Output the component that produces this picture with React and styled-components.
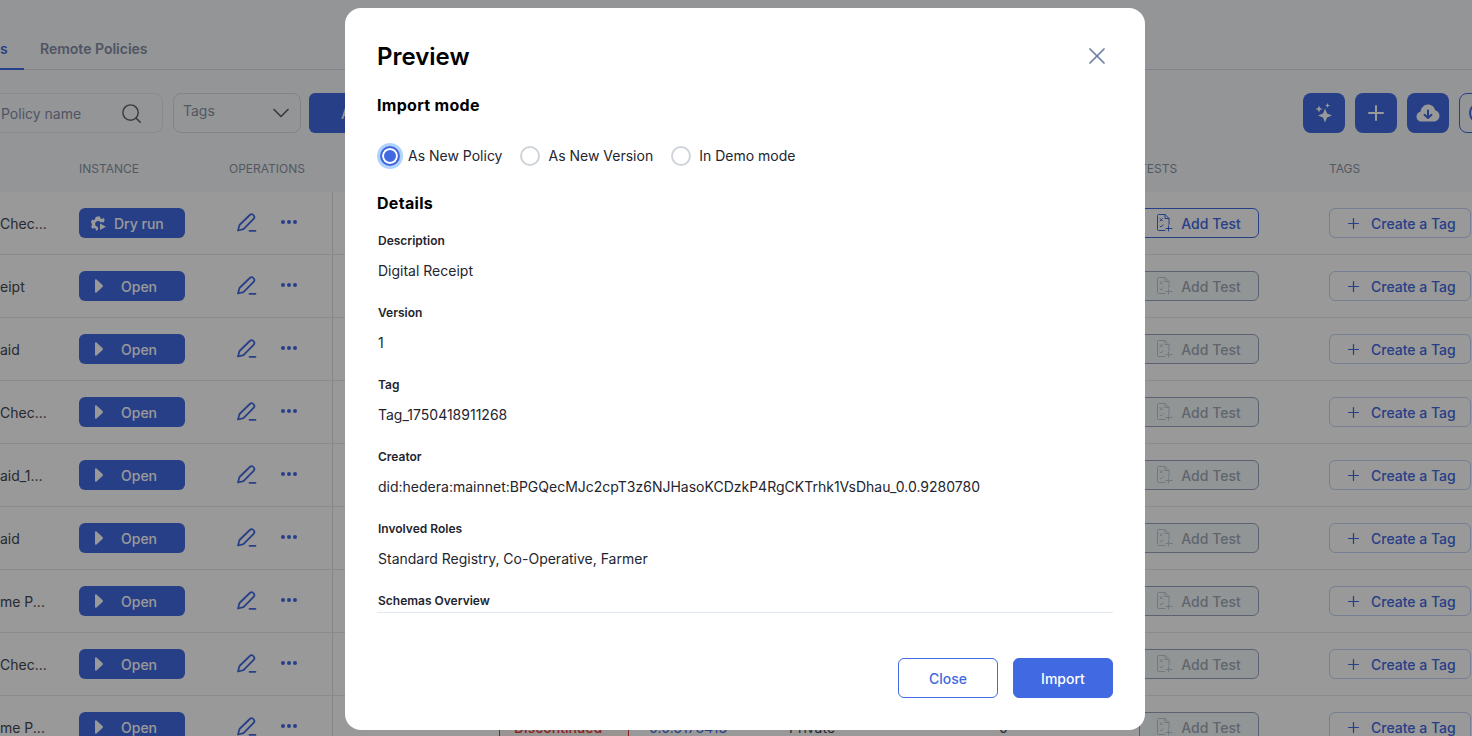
import styled, { createGlobalStyle } from 'styled-components'
import { Search, ChevronDown, Plus, X, Circle } from 'lucide-react'

const rows = [
  { name: 'Chec...', dry: true, active: true },
  { name: 'eipt' },
  { name: 'aid' },
  { name: 'Chec...' },
  { name: 'aid_1...' },
  { name: 'aid' },
  { name: 'me P...' },
  { name: 'Chec...' },
  { name: 'me P...', status: 'Discontinued', topic: '0.0.6178413', kind: 'Private', count: '0' },
]

const details = [
  { label: 'Description', value: 'Digital Receipt' },
  { label: 'Version', value: '1' },
  { label: 'Tag', value: 'Tag_1750418911268' },
  { label: 'Creator', value: 'did:hedera:mainnet:BPGQecMJc2cpT3z6NJHasoKCDzkP4RgCKTrhk1VsDhau_0.0.9280780' },
  { label: 'Involved Roles', value: 'Standard Registry, Co-Operative, Farmer' },
]

const SparkIcon = () => (
  <svg width="20" height="22" viewBox="0 0 20 22" fill="currentColor">
    <path d="M11 6.500 13 11.500 18 13.500 13 15.500 11 20.500 9 15.500 4 13.500 9 11.500Z" />
    <path d="M5 3.500 6 6 8.500 7 6 8 5 10.500 4 8 1.500 7 4 6Z" />
    <path d="M13.500 1 14.200 2.800 16 3.500 14.200 4.200 13.500 6 12.800 4.200 11 3.500 12.800 2.800Z" />
  </svg>
)

const CloudIcon = () => (
  <svg width="24" height="18" viewBox="0 0 24 18">
    <path fill="#fff" d="M6 17.500C2.800 17.500.5 15.300.5 12.400c0-2.500 1.700-4.500 4.100-5C5.300 3.300 8.400.5 12 .5c3.500 0 6.400 2.400 7.200 5.700 2.500.6 4.300 2.900 4.300 5.500 0 3.200-2.500 5.800-5.700 5.800Z" />
    <path fill="none" stroke="#4169e2" strokeWidth="2" strokeLinecap="round" strokeLinejoin="round" d="M12 6.500v7.500M8.500 10.800 12 14l3.500-3.200" />
  </svg>
)

const PenIcon = () => (
  <svg width="20" height="19" viewBox="0 0 20 19" fill="none" stroke="currentColor" strokeWidth="1.750" strokeLinecap="round" strokeLinejoin="round">
    <path d="M1 17.500 2.500 12 12.800 2a2.500 2.500 0 0 1 3.500 0l.3.300a2.500 2.500 0 0 1 0 3.500L6.500 16.200Z" />
    <path d="M12.500 17.800H18.500" />
  </svg>
)

const DotsIcon = () => (
  <svg width="16" height="4" viewBox="0 0 16 4" fill="currentColor">
    <circle cx="2" cy="2" r="2" />
    <circle cx="8" cy="2" r="2" />
    <circle cx="14" cy="2" r="2" />
  </svg>
)

const PlayIcon = () => (
  <svg width="8" height="14" viewBox="0 0 8 14" fill="currentColor">
    <path d="M0 1.200C0 .3.800-.2 1.500.4l6 5.600c.6.500.6 1.500 0 2l-6 5.600C.8 14.200 0 13.700 0 12.800Z" />
  </svg>
)

const GearPlayIcon = () => (
  <svg width="15" height="15" viewBox="0 0 15 15" fill="currentColor">
    <path d="M6 .5h3l.4 1.700 1.500.7 1.500-.9 1.500 1.800-1 1.400.3 1H9.500A3 3 0 1 0 7 11v2.500l-1 1-1-.1-.5-1.800-1.300-.7-1.700.8L0 10.800l1-1.500-.2-1.600L0 6l.9-2.200 1.800.5 1.200-1L4.500 1.500Z" />
    <path d="M9 7.500v6.500l6-3.200Z" />
  </svg>
)

const TestIcon = () => (
  <svg width="16" height="18" viewBox="0 0 16 18" fill="none" stroke="currentColor" strokeWidth="1" strokeLinecap="round" strokeLinejoin="round">
    <path d="M8 16.500H1.500a1 1 0 0 1-1-1v-14a1 1 0 0 1 1-1H8l4 4v6" />
    <path d="M8 .5v4h4" />
    <path d="M3 4.500 5.500 7M5.500 4.500 3 7" />
    <path d="M3 12l1 1 2-2.200" />
    <path d="M11.500 12v5M9 14.500h6" />
  </svg>
)

const App = () => (
  <>
    <GlobalStyle />
    <Page>
      <Tabs>
        <Tab $active>s</Tab>
        <Tab>Remote Policies</Tab>
      </Tabs>
      <Toolbar>
        <SearchBox>
          Policy name
          <Search size={23} strokeWidth={1.5} />
        </SearchBox>
        <TagSelect>
          <span>Tags</span>
          <ChevronDown size={28} strokeWidth={1.5} />
        </TagSelect>
        <ImportButton>A</ImportButton>
        <ToolActions>
          <IconButton><SparkIcon /></IconButton>
          <IconButton><Plus size={24} strokeWidth={2} /></IconButton>
          <IconButton><CloudIcon /></IconButton>
          <IconButton $outline><Circle size={24} strokeWidth={2} /></IconButton>
        </ToolActions>
      </Toolbar>
      <HeadRow>
        <span />
        <HeadCell>Instance</HeadCell>
        <HeadCell>Operations</HeadCell>
        <span />
        <span />
        <span />
        <span />
        <span />
        <HeadCell>Tests</HeadCell>
        <HeadCell>Tags</HeadCell>
      </HeadRow>
      {rows.map((row, i) => (
        <Row key={i}>
          <NameCell>{row.name}</NameCell>
          <div>
            <InstanceButton $dry={row.dry}>
              {row.dry ? <GearPlayIcon /> : <PlayIcon />}
              <InstanceLabel $dry={row.dry}>{row.dry ? 'Dry run' : 'Open'}</InstanceLabel>
            </InstanceButton>
          </div>
          <OpsCell>
            <PenIcon />
            <DotsIcon />
          </OpsCell>
          <div />
          <div>{row.status && <StatusBox>{row.status}</StatusBox>}</div>
          <TopicCell>{row.topic}</TopicCell>
          <PlainCell>{row.kind}</PlainCell>
          <CountCell>{row.count}</CountCell>
          <div>
            <TestButton $active={row.active}>
              <TestGlyph $active={row.active}><TestIcon /></TestGlyph>
              Add Test
            </TestButton>
          </div>
          <div>
            <TagButton>
              <Plus size={17} strokeWidth={1.75} />
              Create a Tag
            </TagButton>
          </div>
        </Row>
      ))}
    </Page>
    <Overlay>
      <Modal>
        <TitleBar>
          <Title>Preview</Title>
          <CloseIcon><X size={28} strokeWidth={1.5} /></CloseIcon>
        </TitleBar>
        <SectionTitle>Import mode</SectionTitle>
        <RadioGroup>
          <RadioItem><Radio $checked />As New Policy</RadioItem>
          <RadioItem><Radio />As New Version</RadioItem>
          <RadioItem><Radio />In Demo mode</RadioItem>
        </RadioGroup>
        <DetailsTitle>Details</DetailsTitle>
        <DetailsBody>
          {details.map(d => (
            <Field key={d.label}>
              <FieldLabel>{d.label}</FieldLabel>
              <FieldValue>{d.value}</FieldValue>
            </Field>
          ))}
          <FieldLabel>Schemas Overview</FieldLabel>
        </DetailsBody>
        <Footer>
          <CloseButton>Close</CloseButton>
          <PrimaryButton>Import</PrimaryButton>
        </Footer>
      </Modal>
    </Overlay>
  </>
)

export default App

const GlobalStyle = createGlobalStyle`
  html, body {
    margin: 0;
    height: 100%;
    overflow: hidden;
  }
  body {
    font-family: Inter, "Liberation Sans", sans-serif;
    font-size: 14px;
    background: #f7f9fc;
  }
  * {
    box-sizing: border-box;
  }
`

const Page = styled.div`
  width: 1472px;
  height: 736px;
  overflow: hidden;
  background: #f7f9fc;
`

const Tabs = styled.div`
  height: 70px;
  display: flex;
  gap: 16px;
  border-bottom: 1px solid #d8dde6;
`

const Tab = styled.div`
  height: 70px;
  padding: 40px 0 0;
  width: ${p => (p.$active ? '24px' : 'auto')};
  font-size: 14px;
  line-height: 17px;
  font-weight: 600;
  color: ${p => (p.$active ? '#4169e2' : '#848ea5')};
  border-bottom: ${p => (p.$active ? '2px solid #4169e2' : 'none')};
`

const Toolbar = styled.div`
  height: 40px;
  margin-top: 23px;
  display: flex;
  align-items: stretch;
`

const SearchBox = styled.div`
  width: 163px;
  display: flex;
  align-items: center;
  justify-content: space-between;
  padding: 0 19px 0 1px;
  border: 1px solid #e1e7ef;
  border-left: none;
  border-radius: 0 8px 8px 0;
  color: #848ea5;
  svg {
    color: #60646b;
  }
`

const TagSelect = styled.div`
  width: 128px;
  margin-left: 10px;
  display: flex;
  align-items: center;
  justify-content: space-between;
  padding: 0 5px 5px 9px;
  border: 1px solid #d5dbe5;
  border-radius: 8px;
  color: #8a92a3;
  svg {
    color: #60646b;
    margin-top: 5px;
  }
`

const ImportButton = styled.div`
  width: 140px;
  margin-left: 8px;
  display: flex;
  align-items: center;
  padding-left: 32px;
  border-radius: 6px;
  background: #4169e2;
  color: #fff;
  font-weight: 500;
`

const ToolActions = styled.div`
  margin-left: auto;
  margin-right: -29px;
  display: flex;
  gap: 10px;
`

const IconButton = styled.div`
  width: 42px;
  display: grid;
  place-items: center;
  border-radius: 8px;
  color: ${p => (p.$outline ? '#4169e2' : '#fff')};
  background: ${p => (p.$outline ? 'transparent' : '#4169e2')};
  border: ${p => (p.$outline ? '1px solid #4169e2' : 'none')};
`

const grid = `
  display: grid;
  grid-template-columns: 79px 150px 104px 166px 150px 140px 210px 140px 190px 143px;
`

const HeadRow = styled.div`
  ${grid}
  height: 42px;
  margin-top: 17px;
  padding-bottom: 6px;
  align-items: center;
`

const HeadCell = styled.div`
  font-size: 12px;
  line-height: 15px;
  color: #8b93a4;
  text-transform: uppercase;
`

const Row = styled.div`
  ${grid}
  height: 63px;
  align-items: center;
  background: #fff;
  border-bottom: 1px solid #e6e8ec;
`

const NameCell = styled.div`
  color: #44484f;
  white-space: nowrap;
`

const InstanceButton = styled.div`
  width: 106px;
  height: 30px;
  display: flex;
  align-items: center;
  padding-left: ${p => (p.$dry ? '12px' : '16px')};
  border-radius: 6px;
  background: #4169e2;
  color: #fff;
  font-weight: 500;
`

const InstanceLabel = styled.span`
  margin-left: ${p => (p.$dry ? '8px' : '18px')};
`

const OpsCell = styled.div`
  height: 62px;
  display: flex;
  align-items: center;
  gap: 24px;
  padding-left: 8px;
  color: #4169e2;
  border-right: 1px solid #dfe2e7;
  svg {
    margin-top: -2px;
  }
`

const StatusBox = styled.div`
  width: 130px;
  height: 30px;
  display: flex;
  align-items: center;
  padding-left: 14px;
  border: 1px solid #e53935;
  border-radius: 6px;
  background: #fff5f3;
  color: #e53935;
  font-weight: 500;
`

const TopicCell = styled.div`
  color: #4169e2;
`

const PlainCell = styled.div`
  color: #44484f;
`

const CountCell = styled(PlainCell)`
  padding-left: 0;
`

const TestButton = styled.div`
  width: 120px;
  height: 30px;
  display: flex;
  align-items: center;
  justify-content: center;
  gap: 8px;
  border-radius: 6px;
  font-weight: 500;
  border: 1px solid ${p => (p.$active ? '#4169e2' : '#9aa4bc')};
  background: ${p => (p.$active ? '#fff' : '#f4f8fa')};
  color: ${p => (p.$active ? '#4169e2' : '#a0a8b8')};
`

const TestGlyph = styled.span`
  display: flex;
  color: ${p => (p.$active ? '#4169e2' : '#c2c8d2')};
`

const TagButton = styled.div`
  width: 142px;
  height: 30px;
  display: flex;
  align-items: center;
  gap: 9px;
  padding-left: 15px;
  border: 1px solid #c6d2f5;
  border-radius: 6px;
  color: #4169e2;
  font-weight: 500;
  white-space: nowrap;
`

const Overlay = styled.div`
  position: fixed;
  inset: 0;
  background: rgba(0, 0, 0, 0.4);
  padding: 8px 0 0 345px;
`

const Modal = styled.div`
  width: 800px;
  height: 722px;
  padding: 0 32px;
  display: flex;
  flex-direction: column;
  background: #fff;
  border-radius: 16px;
`

const TitleBar = styled.div`
  height: 48px;
  margin-top: 24px;
  display: flex;
  align-items: center;
  justify-content: space-between;
`

const Title = styled.h1`
  margin: 0;
  font-size: 24px;
  line-height: 29px;
  font-weight: 600;
  color: #000;
`

const CloseIcon = styled.div`
  display: grid;
  place-items: center;
  margin-right: 2px;
  color: #6c7fa3;
`

const SectionTitle = styled.h2`
  margin: 16px 0 0;
  font-size: 16px;
  line-height: 19px;
  font-weight: 700;
  color: #000;
  letter-spacing: 0.3px;
`

const RadioGroup = styled.div`
  margin-top: 31px;
  display: flex;
  align-items: center;
  gap: 18px;
  padding-left: 3px;
`

const RadioItem = styled.label`
  display: flex;
  align-items: center;
  gap: 8px;
  line-height: 20px;
  color: #23252e;
`

const Radio = styled.span`
  width: 20px;
  height: 20px;
  border-radius: 50%;
  border: 2px solid ${p => (p.$checked ? '#4169e2' : '#ced4da')};
  background: ${p => (p.$checked ? '#4169e2' : '#fff')};
  box-shadow: ${p => (p.$checked ? 'inset 0 0 0 2px #fff, 0 0 0 3px #b0d4fb' : 'none')};
`

const DetailsTitle = styled(SectionTitle)`
  margin-top: 28px;
`

const DetailsBody = styled.div`
  height: 400px;
  padding: 20px 0 0 1px;
  overflow: hidden;
  border-bottom: 1px solid #e1e7ef;
`

const Field = styled.div`
  height: 72px;
`

const FieldLabel = styled.div`
  font-size: 12px;
  line-height: 15px;
  font-weight: 600;
  color: #23252e;
`

const FieldValue = styled.div`
  margin-top: 14px;
  font-size: 14px;
  line-height: 17px;
  color: #23252e;
`

const Footer = styled.div`
  margin-top: 45px;
  display: flex;
  justify-content: flex-end;
  gap: 15px;
`

const CloseButton = styled.div`
  width: 100px;
  height: 40px;
  display: grid;
  place-items: center;
  border: 1px solid #4169e2;
  border-radius: 6px;
  color: #4169e2;
  font-weight: 500;
`

const PrimaryButton = styled(CloseButton)`
  background: #4169e2;
  color: #fff;
`
